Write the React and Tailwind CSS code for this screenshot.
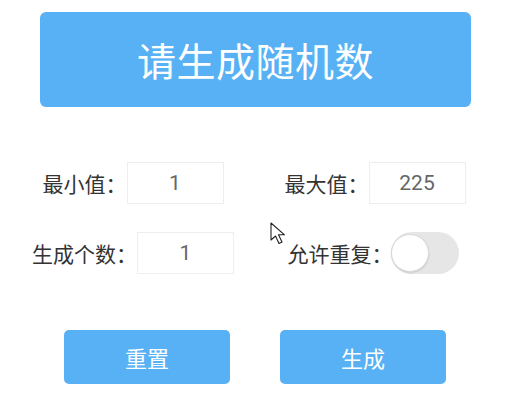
import { useState } from 'react'

const cjk = { fontFamily: '"Noto Sans CJK SC", "Microsoft YaHei", sans-serif' }
const num = { fontFamily: 'Roboto, "Noto Sans CJK SC", sans-serif' }

function Field({ label, value, onChange }) {
  return (
    <div className="flex items-center justify-center h-[42px]">
      <span className="text-[21px] text-[#333] leading-none" style={cjk}>{label}</span>
      <input
        value={value}
        onChange={(e) => onChange(e.target.value)}
        className="w-[97px] h-[42px] border border-[#eeeeee] bg-white text-center text-[21px] text-[#666] outline-none"
        style={num}
      />
    </div>
  )
}

export default function App() {
  const [min, setMin] = useState('1')
  const [max, setMax] = useState('225')
  const [count, setCount] = useState('1')
  const [repeat, setRepeat] = useState(false)

  return (
    <div className="relative w-[506px] h-[400px] bg-white overflow-hidden pt-[12px]" style={cjk}>
      <div className="ml-[40px] w-[431px] h-[95px] rounded-[6px] bg-[#58b1f5] flex items-center justify-center">
        <span className="text-white text-[39px] leading-none tracking-[0.5px]">请生成随机数</span>
      </div>

      <div className="ml-[12px] w-[484px] grid grid-cols-2 mt-[55px]">
        <Field label="最小值：" value={min} onChange={setMin} />
        <Field label="最大值：" value={max} onChange={setMax} />
      </div>

      <div className="ml-[12px] w-[484px] grid grid-cols-2 mt-[28px]">
        <Field label="生成个数：" value={count} onChange={setCount} />
        <div className="flex items-center justify-center h-[42px] pr-[4px]">
          <span className="text-[21px] text-[#333] leading-none">允许重复：</span>
          <button
            type="button"
            onClick={() => setRepeat(!repeat)}
            className={`relative w-[68px] h-[42px] -ml-[2px] rounded-full ${repeat ? 'bg-[#58b1f5]' : 'bg-[#e6e6e6]'}`}
          >
            <span
              className={`absolute top-[2px] ${repeat ? 'left-[28px]' : 'left-0'} w-[38px] h-[38px] rounded-full bg-white border border-[#d9d9d9] shadow-[0_1px_2px_rgba(0,0,0,0.12)]`}
            />
          </button>
        </div>
      </div>

      <div className="flex justify-center gap-[50px] mt-[56px] pl-[4px]">
        <button
          type="button"
          onClick={() => { setMin('1'); setMax('225'); setCount('1'); setRepeat(false) }}
          className="w-[166px] h-[54px] rounded-[5px] bg-[#58b1f5] text-white text-[22px]"
        >
          重置
        </button>
        <button type="button" className="w-[166px] h-[54px] rounded-[5px] bg-[#58b1f5] text-white text-[22px]">
          生成
        </button>
      </div>

      {/* mouse pointer captured in the screenshot */}
      <svg className="absolute left-[270px] top-[222px]" width="20" height="24" viewBox="0 0 20 24">
        <path d="M1 1 L1 18 L5.5 14 L9 21.5 L12 20 L8.5 12.8 L14.5 12.8 Z" fill="white" stroke="#222" strokeWidth="1.1" strokeLinejoin="round" />
      </svg>
    </div>
  )
}
